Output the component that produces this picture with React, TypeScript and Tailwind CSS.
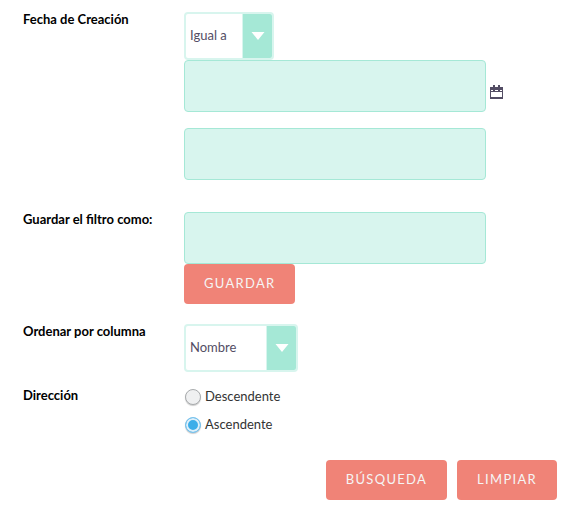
import { useState, type ReactNode } from "react";
import clsx from "clsx";

const DIRECTIONS = [
  { value: "desc", label: "Descendente" },
  { value: "asc", label: "Ascendente" },
];

const LABEL = "text-[13px] leading-[14px] font-bold text-black";
const TEXT_INPUT =
  "block h-13 w-[302px] rounded border border-[#a5e8d6] bg-[#d8f5ee] px-2 text-[13px] text-[#534d64] outline-none";

function Button({ children }: { children: ReactNode }) {
  return (
    <button
      type="button"
      className="h-10 rounded bg-[#f08377] px-5 text-[13px] tracking-widest text-[#f5f5f5] uppercase"
    >
      {children}
    </button>
  );
}

function Select({
  id,
  options,
  className,
}: {
  id: string;
  options: string[];
  className: string;
}) {
  return (
    <div className={clsx("relative h-12", className)}>
      <select
        id={id}
        className="h-full w-full appearance-none rounded border-2 border-[#d8f5ee] bg-white pr-8 pb-px pl-1 text-[13px] text-[#534d64] outline-none"
      >
        {options.map((o) => (
          <option key={o}>{o}</option>
        ))}
      </select>
      <span className="pointer-events-none absolute inset-y-[2px] right-[2px] flex w-[30px] items-center justify-center rounded-r-xs border-l border-[#d8f5ee] bg-[#a5e8d6]">
        <svg width="14" height="8" viewBox="0 0 14 8" fill="#fff">
          <path d="M0.5 0H13.5L7 8Z" />
        </svg>
      </span>
    </div>
  );
}

function CalendarIcon() {
  return (
    <svg width="13" height="14" viewBox="0 0 13 14" shapeRendering="crispEdges">
      <path
        fill="#534d64"
        fillRule="evenodd"
        d="M3 0H5V2H8V0H10V2H13V14H0V2H3ZM1 5V6H3V5ZM5 5V6H8V5ZM10 5V6H12V5ZM1 7V12H12V7Z"
      />
    </svg>
  );
}

export default function App() {
  const [direction, setDirection] = useState("asc");

  return (
    <form className="bg-white pt-3 pr-[19px] pb-[19px] pl-[23px] font-[Lato,sans-serif]">
      <div className="grid grid-cols-[161px_1fr]">
        <label htmlFor="date-operator" className={LABEL}>
          Fecha de Creación
        </label>
        <div className="pb-8">
          <Select id="date-operator" options={["Igual a"]} className="w-[90px]" />
          <div className="flex items-center gap-1">
            <input type="text" aria-label="Fecha de Creación" className={TEXT_INPUT} />
            <button type="button" aria-label="Calendario" className="pt-3">
              <CalendarIcon />
            </button>
          </div>
          <input type="text" aria-label="Fecha final" className={clsx(TEXT_INPUT, "mt-4")} />
        </div>

        <label htmlFor="filter-name" className={LABEL}>
          Guardar el filtro como:
        </label>
        <div className="pb-5">
          <input id="filter-name" type="text" className={TEXT_INPUT} />
          <Button>Guardar</Button>
        </div>

        <label htmlFor="order-by" className={LABEL}>
          Ordenar por columna
        </label>
        <div className="pb-3">
          <Select id="order-by" options={["Nombre"]} className="w-[114px]" />
        </div>

        <span id="direction-label" className={clsx(LABEL, "pt-1")}>
          Dirección
        </span>
        <div
          role="radiogroup"
          aria-labelledby="direction-label"
          className="flex flex-col gap-[2px] pb-[22px]"
        >
          {DIRECTIONS.map((d) => (
            <label
              key={d.value}
              className="flex h-[26px] w-fit items-center gap-1 pl-px text-[13px] text-[#333]"
            >
              <input
                type="radio"
                name="direction"
                value={d.value}
                checked={direction === d.value}
                onChange={() => setDirection(d.value)}
                className="size-4 appearance-none rounded-full border border-[#a8abad] bg-[#eff0f1] shadow-[0_1px_1px_rgba(0,0,0,0.2)] checked:border-[#7cc4ee] checked:bg-[#3daee9] checked:inset-ring-2 checked:inset-ring-[#dff0fa]"
              />
              {d.label}
            </label>
          ))}
        </div>
      </div>

      <div className="flex justify-end gap-[10px]">
        <Button>Búsqueda</Button>
        <Button>Limpiar</Button>
      </div>
    </form>
  );
}
